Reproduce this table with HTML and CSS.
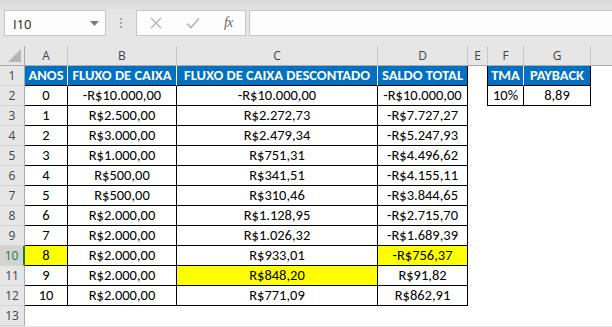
FILE: index.html
```html
<!DOCTYPE html>
<html>
<head>
<meta charset="utf-8">
<link rel="stylesheet" href="styles.css">
</head>
<body>
<div class="app">
  <div class="topstrip"></div>
  <div class="fbar">
    <div class="namebox"><span>I10</span><svg class="dd" width="9" height="5" viewBox="0 0 9 5"><path d="M0 0h9L4.5 5z" fill="#7a7a7a"/></svg></div>
    <div class="grip"><i></i><i></i><i></i></div>
    <div class="fxbox">
      <svg class="ico" width="12" height="12" viewBox="0 0 12 12"><path d="M1 1L11 11M11 1L1 11" stroke="#b3b3b3" stroke-width="1.3" fill="none"/></svg>
      <svg class="ico" width="14" height="12" viewBox="0 0 14 12"><path d="M1 6.5L5 10.5L13 1.5" stroke="#b3b3b3" stroke-width="1.6" fill="none"/></svg>
      <span class="fx">fx</span>
    </div>
    <div class="finput"></div>
  </div>
  <div class="sheet">
    <div class="corner"><svg width="13" height="13" viewBox="0 0 13 13"><path d="M13 0V13H0z" fill="#b5b5b5"/></svg></div>
    <div class="ch">A</div><div class="ch">B</div><div class="ch">C</div><div class="ch">D</div><div class="ch">E</div><div class="ch">F</div><div class="ch">G</div><div class="ch last"></div>

    <div class="rh">1</div>
    <div class="c h">ANOS</div><div class="c h">FLUXO DE CAIXA</div><div class="c h">FLUXO DE CAIXA DESCONTADO</div><div class="c h hl">SALDO TOTAL</div><div class="c el"></div><div class="c h">TMA</div><div class="c h hl">PAYBACK</div><div class="c"></div>

    <div class="rh">2</div>
    <div class="c b">0</div><div class="c b">-R$10.000,00</div><div class="c b">-R$10.000,00</div><div class="c b">-R$10.000,00</div><div class="c el"></div><div class="c b">10%</div><div class="c b">8,89</div><div class="c"></div>

    <div class="rh">3</div>
    <div class="c b">1</div><div class="c b">R$2.500,00</div><div class="c b">R$2.272,73</div><div class="c b">-R$7.727,27</div><div class="c"></div><div class="c"></div><div class="c"></div><div class="c"></div>

    <div class="rh">4</div>
    <div class="c b">2</div><div class="c b">R$3.000,00</div><div class="c b">R$2.479,34</div><div class="c b">-R$5.247,93</div><div class="c"></div><div class="c"></div><div class="c"></div><div class="c"></div>

    <div class="rh">5</div>
    <div class="c b">3</div><div class="c b">R$1.000,00</div><div class="c b">R$751,31</div><div class="c b">-R$4.496,62</div><div class="c"></div><div class="c"></div><div class="c"></div><div class="c"></div>

    <div class="rh">6</div>
    <div class="c b">4</div><div class="c b">R$500,00</div><div class="c b">R$341,51</div><div class="c b">-R$4.155,11</div><div class="c"></div><div class="c"></div><div class="c"></div><div class="c"></div>

    <div class="rh">7</div>
    <div class="c b">5</div><div class="c b">R$500,00</div><div class="c b">R$310,46</div><div class="c b">-R$3.844,65</div><div class="c"></div><div class="c"></div><div class="c"></div><div class="c"></div>

    <div class="rh">8</div>
    <div class="c b">6</div><div class="c b">R$2.000,00</div><div class="c b">R$1.128,95</div><div class="c b">-R$2.715,70</div><div class="c"></div><div class="c"></div><div class="c"></div><div class="c"></div>

    <div class="rh">9</div>
    <div class="c b">7</div><div class="c b">R$2.000,00</div><div class="c b">R$1.026,32</div><div class="c b">-R$1.689,39</div><div class="c"></div><div class="c"></div><div class="c"></div><div class="c"></div>

    <div class="rh sel">10</div>
    <div class="c b y">8</div><div class="c b">R$2.000,00</div><div class="c b">R$933,01</div><div class="c b y">-R$756,37</div><div class="c"></div><div class="c"></div><div class="c"></div><div class="c"></div>

    <div class="rh">11</div>
    <div class="c b">9</div><div class="c b">R$2.000,00</div><div class="c b y">R$848,20</div><div class="c b">R$91,82</div><div class="c"></div><div class="c"></div><div class="c"></div><div class="c"></div>

    <div class="rh">12</div>
    <div class="c b">10</div><div class="c b">R$2.000,00</div><div class="c b">R$771,09</div><div class="c b">R$862,91</div><div class="c"></div><div class="c"></div><div class="c"></div><div class="c"></div>

    <div class="rh">13</div>
    <div class="c"></div><div class="c"></div><div class="c"></div><div class="c"></div><div class="c"></div><div class="c"></div><div class="c"></div><div class="c"></div>
  </div>
</div>
</body>
</html>
```
FILE: styles.css
```css
* { box-sizing: border-box; }
html, body { margin: 0; padding: 0; }
body {
  width: 612px;
  height: 327px;
  overflow: hidden;
  background: #e6e6e6;
}
.app { width: 612px; height: 327px; overflow: hidden; }
.topstrip {
  height: 10px;
  background: linear-gradient(#d9d9d9, #e3e3e3);
}
.fbar {
  display: flex;
  height: 26px;
  padding-left: 4px;
}
.namebox {
  width: 102px;
  border: 1px solid #c6c6c6;
  background: #fdfdfd;
  display: flex;
  align-items: center;
  justify-content: space-between;
  padding: 0 6px 0 8px;
  font-family: "Open Sans", "Noto Sans", sans-serif;
  font-size: 13px;
  color: #222;
}
.namebox span { padding-top: 1px; }
.grip {
  width: 30px;
  display: flex;
  flex-direction: column;
  align-items: center;
  justify-content: center;
  gap: 2px;
}
.grip i { display: block; width: 2px; height: 2px; background: #a8a8a8; }
.fxbox {
  width: 110px;
  border: 1px solid #c6c6c6;
  background: #fdfdfd;
  display: flex;
  align-items: center;
  padding-left: 13px;
}
.fxbox .ico:nth-child(1) { margin-right: 24px; }
.fxbox .ico:nth-child(2) { margin-right: 24px; }
.fx {
  font-family: "Liberation Serif", serif;
  font-style: italic;
  font-size: 14px;
  color: #666;
  letter-spacing: -1px;
}
.finput {
  flex: 1;
  margin-left: 3px;
  border: 1px solid #c6c6c6;
  border-right: none;
  background: #fdfdfd;
}
.sheet {
  margin-top: 10px;
  display: grid;
  grid-template-columns: 25px 43px 109px 201px 90px 20px 36px 67px 1fr;
  grid-auto-rows: 20px;
  background: #fff;
}
.corner {
  background: #e6e6e6;
  border-right: 1px solid #ababab;
  border-bottom: 1px solid #ababab;
  display: flex;
  align-items: flex-end;
  justify-content: flex-end;
  padding: 0 3px 3px 0;
}
.corner svg { display: block; }
.ch, .rh {
  background: #e6e6e6;
  font-family: "Open Sans", "Noto Sans", sans-serif;
  font-size: 12px;
  color: #444;
  display: flex;
  align-items: center;
  justify-content: center;
}
.ch {
  border-right: 1px solid #c8c8c8;
  border-bottom: 1px solid #ababab;
}
.ch.last { border-right: none; }
.rh {
  border-right: 1px solid #ababab;
  border-bottom: 1px solid #d5d5d5;
}
.rh.sel {
  background: #d3d3d3;
  color: #217346;
  border-right: 2px solid #217346;
}
.c {
  background: #fff;
  font-family: Carlito, "Liberation Sans Narrow", Lato, sans-serif;
  font-size: 14.5px;
  color: #000;
  display: flex;
  align-items: flex-end;
  justify-content: center;
  line-height: 17px;
  padding-bottom: 1px;
  white-space: nowrap;
  overflow: hidden;
}
.b {
  border-right: 1px solid #000;
  border-bottom: 1px solid #000;
}
.h {
  background: #0070c0;
  color: #fff;
  font-weight: bold;
  border-right: 1px solid #fff;
  border-bottom: 1px solid #000;
}
.h.hl { border-right-color: #000; }
.el { border-right: 1px solid #000; }
.y { background: #ffff00; }
```
